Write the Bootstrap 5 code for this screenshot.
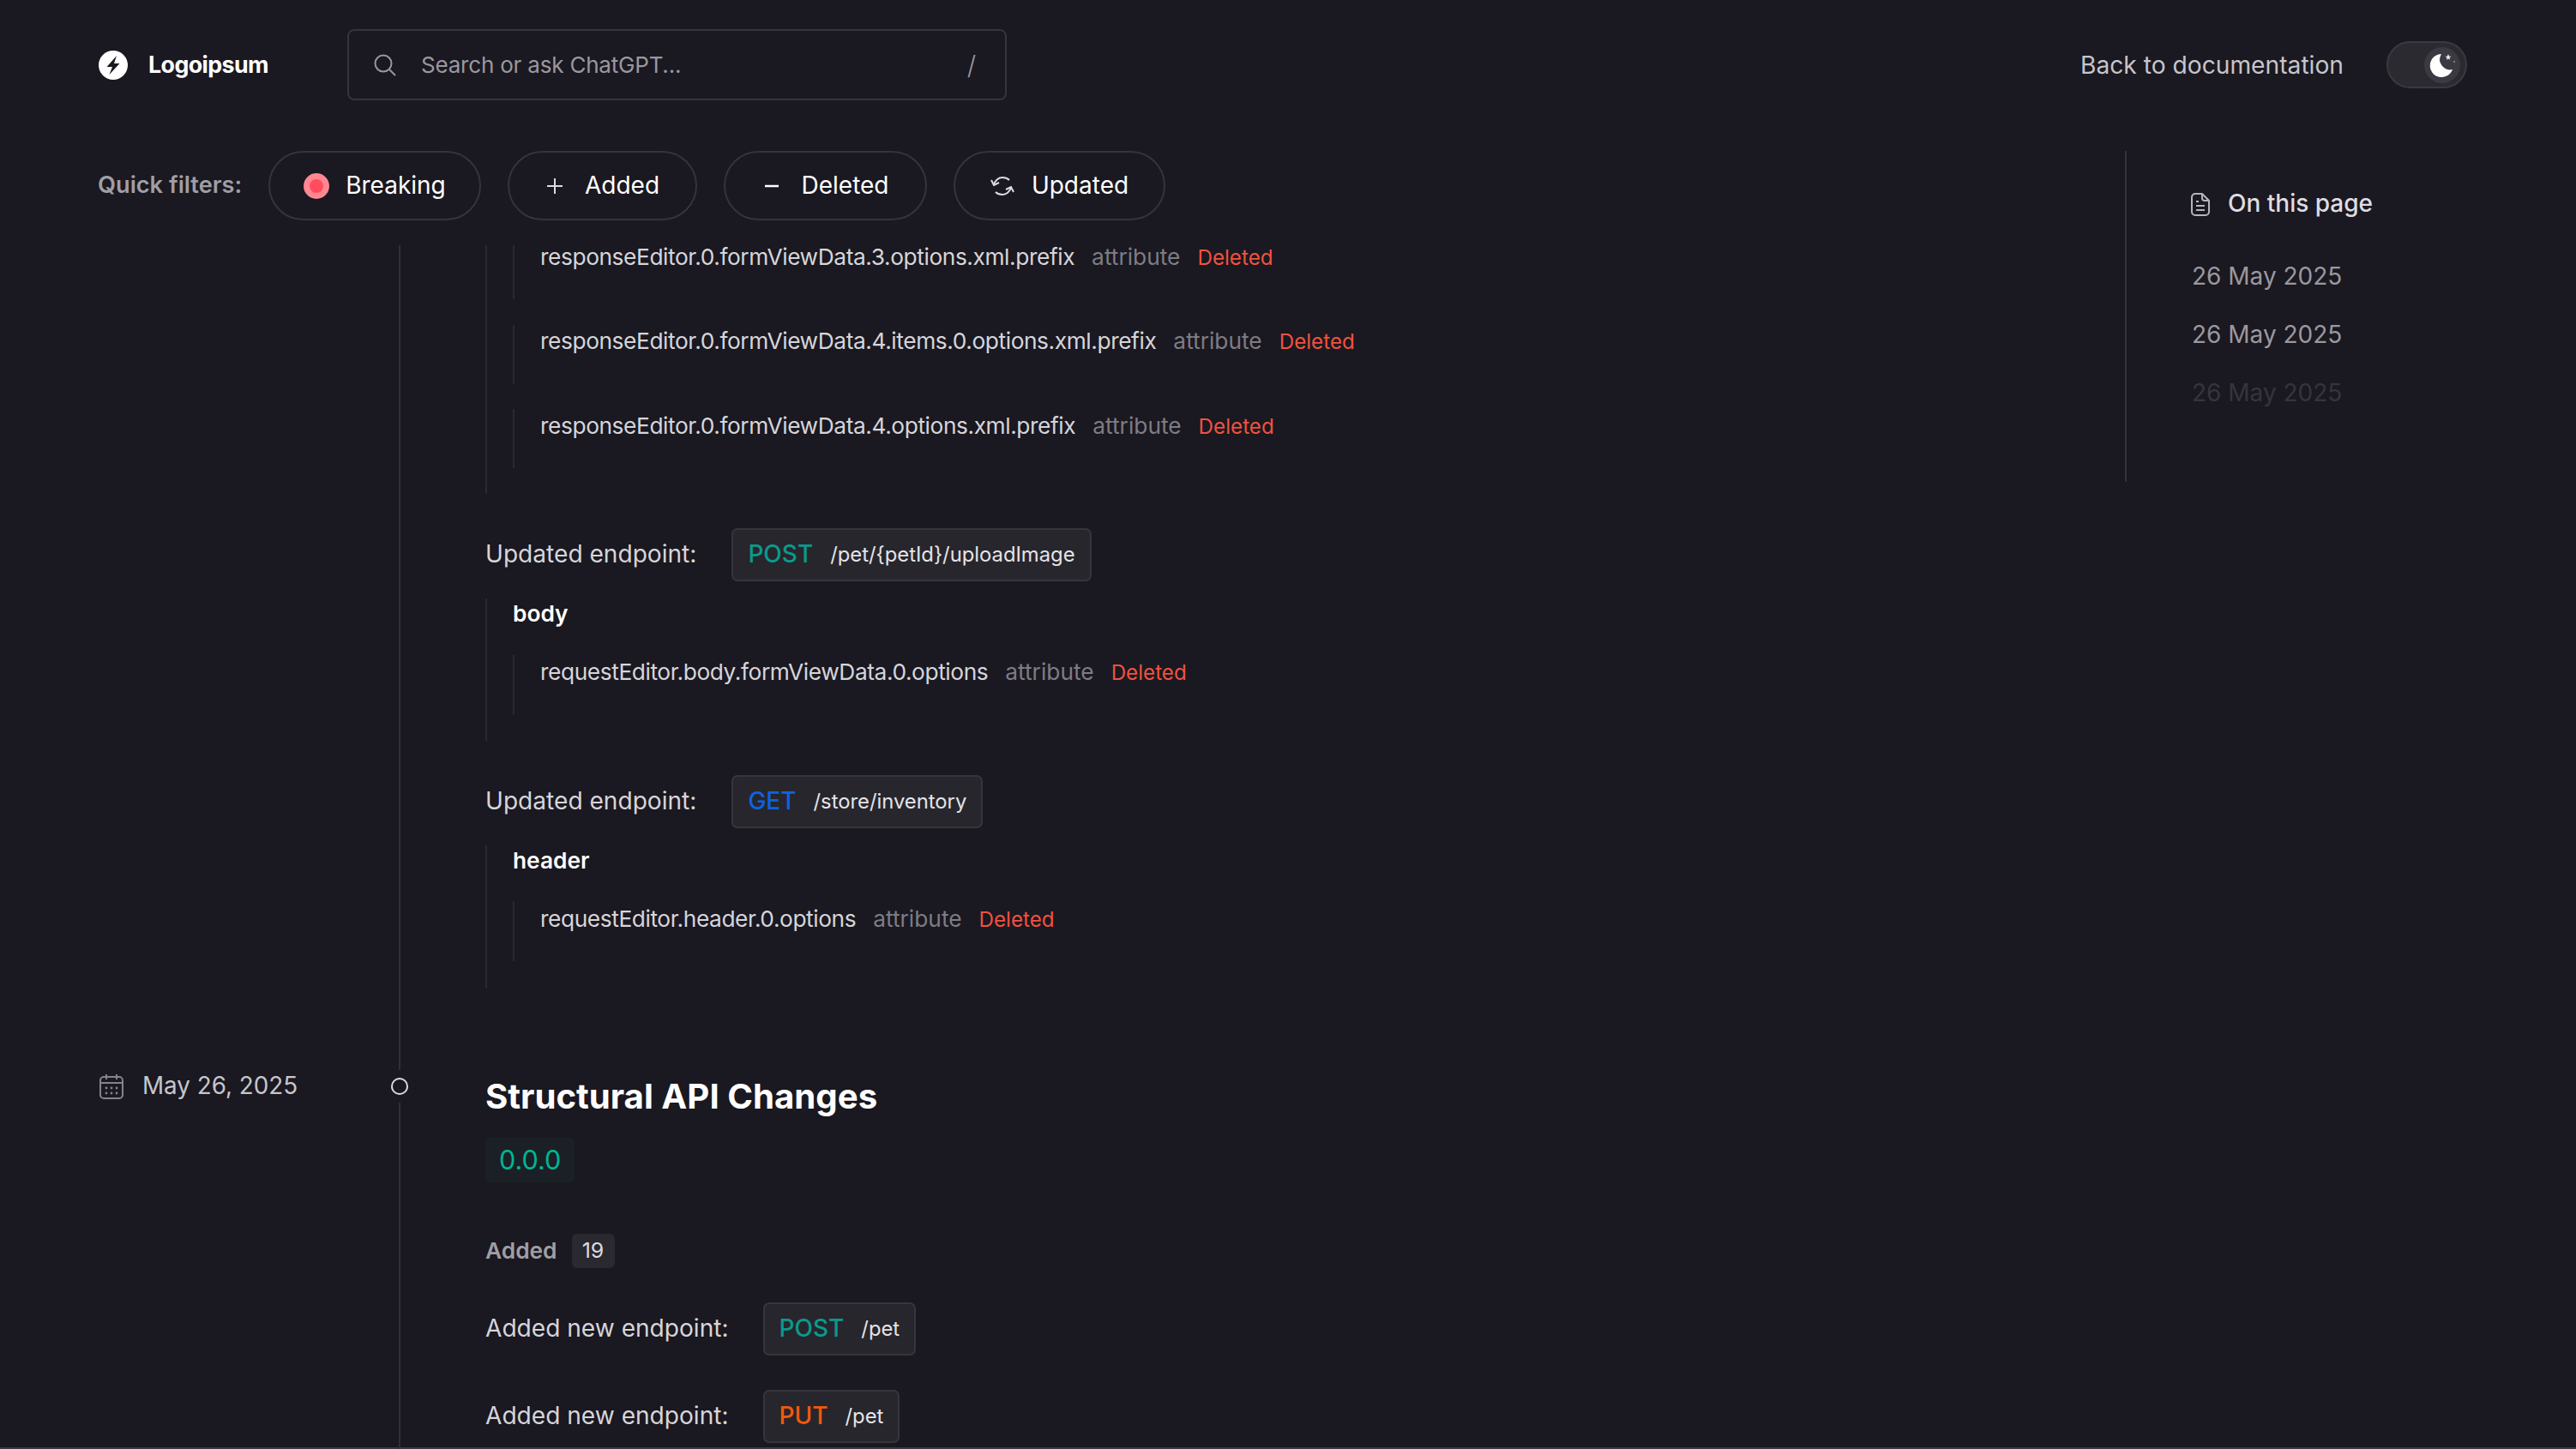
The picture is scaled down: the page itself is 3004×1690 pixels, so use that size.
<!doctype html>
<html lang="en">
<head>
<meta charset="utf-8">
<title>Changelog</title>
<link href="https://cdn.jsdelivr.net/npm/bootstrap@5.3.0/dist/css/bootstrap.min.css" rel="stylesheet">
<style>
:root{--bgc:#1a1820;--ln:#35333b;--txt:#dcdbe0;--mut:#9a989f}
html,body{height:100%;overflow:hidden}
body{background:var(--bgc);color:var(--txt);font-family:Inter,"Liberation Sans",sans-serif;font-size:28px;line-height:1.2}
.shell{height:1690px;border-bottom:2px solid #3a3840}
.topbar{height:176px;padding:34px 127px 59px 115px}
.brand{width:290px;color:#fff;font-weight:700;font-size:26.8px;letter-spacing:-.6px;gap:24px}
.searchbox{width:769px;height:83px;border:2px solid var(--ln);border-radius:8px;padding:0 34px 0 28px;color:var(--mut);font-size:26px;letter-spacing:-.2px;gap:28px}
.slashkey{font-size:30px;font-weight:300}
.backlink{color:#c6c5ca;font-size:28.2px;text-decoration:none;margin-right:50px;padding-top:2px}
.modeswitch{width:94px;height:55px;border-radius:28px;background:#2b2a31;border:2px solid #3a3840;padding-right:6px}
.modeknob{width:42px;height:42px;border-radius:50%;background:#3b3a42}
.mainwrap{height:1512px}
.leftcol{width:2478px;flex:none;padding-left:114px}
.filterbar{height:110px;padding-bottom:29px;gap:31px}
.filterlabel{color:#a09ea5;font-weight:600;font-size:27.2px;width:168px;white-space:nowrap}
.filterpill{height:81px;border:2px solid var(--ln);border-radius:41px;color:#fff;font-size:28px;gap:24px;background:transparent}
.pill-a{width:248px;gap:19px}.pill-b{width:221px}.pill-c{width:237px}.pill-d{width:247px;gap:20px}
.hotdot{width:30px;height:30px;border-radius:50%;background:#ff4d5e;border:7px solid #ff8791}
.timeblock{display:flex}
.datecol{width:351px;flex:none;color:#c6c5ca;font-size:27.8px;gap:22px;padding:0 0 0 2px;height:36px}
.timebody{flex:1;position:relative;border-left:2px solid #302e36;padding-left:99px}
.changegrp{border-left:2px solid #2a2830;padding-left:30px;padding-bottom:30px}
.changerow{border-left:2px solid #2a2830;height:69px;padding-left:30px;padding-top:8.600px;margin-bottom:29.5px;gap:20px;font-size:26.3px;line-height:.8;letter-spacing:-.41px;color:#d6d5da;align-items:baseline}
.changerow:first-child{height:63px;padding-top:2.600px}
.changerow:last-child{margin-bottom:0}
.attrname{color:#7e7c84;font-size:26.3px;letter-spacing:0}
.deltag{color:#f0523f;font-size:24.2px;letter-spacing:0}
.endrow{gap:40px;font-size:28.1px;color:#d6d5da;height:62px}
.endchip{height:62px;background:#27262d;border:2px solid #36343c;border-radius:7px;padding:0 17px;gap:20px;font-size:23.8px;color:#e4e3e7;margin-left:1px}
.verb{font-size:28px;font-weight:500}
.v-post{color:#0a9a8c}.v-get{color:#0f62e0}.v-put{color:#f2590c}
.grouphead{color:#fff;font-weight:600;font-size:26.3px;height:66px;padding-top:2px}
.blockgap{margin-top:40px}
.mt-grp{margin-top:20px;padding-bottom:31px}
.nodedot{position:absolute;left:-11px;top:104.500px;width:20px;height:20px;border-radius:50%;border:2px solid #dcdbe0;background:var(--bgc);box-shadow:0 0 0 9px var(--bgc)}
.bigtitle{color:#fff;font-weight:700;font-size:40.2px;line-height:48px;margin:0}
.verbadge{display:inline-flex;align-items:center;height:52px;padding:0 16px;background:#1b2026;border-radius:5px;color:#00b593;font-size:30.6px;margin-top:24px}
.addhead{color:#a09ea5;font-weight:600;font-size:26.3px;gap:17px;margin-top:60px;height:40px}
.countpill{width:50px;height:40px;background:#2a2930;border-radius:6px;color:#dcdbe0;font-weight:400;font-size:24.9px}
.lastblock .timebody{padding-top:103px;padding-bottom:60px}
.lastblock .datecol{margin-top:96.500px}
.added-row{margin-top:40px}
.added-row .endchip{margin-left:0}
.aside-pane{height:386px;border-left:2px solid #33313a;padding:48px 0 0 75px}
.asidehead{color:#dedde2;font-weight:500;font-size:28px;gap:21px;height:28px}
.asidelink{color:#9a989f;font-size:28px;height:68px;padding-left:1px}
.fadelink{color:#36343c}
.mt-list{margin-top:54px}
</style>
</head>
<body>
<div class="shell d-flex flex-column">
  <header class="topbar d-flex align-items-center">
    <div class="brand d-flex align-items-center">
      <svg width="34" height="34" viewBox="0 0 34 34"><circle cx="17" cy="17" r="17" fill="#fff"/><path d="M21 6 9.500 19H16l-3.500 9L24.500 15H18z" fill="#1a1820"/></svg>
      <span>Logoipsum</span>
    </div>
    <div class="searchbox d-flex align-items-center">
      <svg width="28" height="28" viewBox="0 0 28 28" fill="none" stroke="#9a989f" stroke-width="2"><circle cx="12" cy="12" r="9.500"/><path d="m19 19 7 7"/></svg>
      <span class="flex-grow-1">Search or ask ChatGPT...</span>
      <span class="slashkey">/</span>
    </div>
    <div class="ms-auto d-flex align-items-center">
      <a class="backlink" href="#">Back to documentation</a>
      <div class="modeswitch d-flex align-items-center justify-content-end">
        <div class="modeknob d-flex align-items-center justify-content-center">
          <svg width="34" height="34" viewBox="0 0 34 34"><path d="M16 4A13.500 13.500 0 1 0 29 22 12 12 0 0 1 16 4z" fill="#fff"/><path d="m24 4 1 2.500 2.500.2-2 1.600.7 2.500-2.200-1.400-2.200 1.400.7-2.500-2-1.600 2.500-.2z" fill="#e8e8ec"/><circle cx="31" cy="13" r=".8" fill="#ccc"/></svg>
        </div>
      </div>
    </div>
  </header>
  <div class="mainwrap d-flex">
    <div class="leftcol">
      <div class="filterbar d-flex align-items-center">
        <span class="filterlabel">Quick filters:</span>
        <button class="filterpill pill-a d-flex align-items-center justify-content-center"><span class="hotdot"></span>Breaking</button>
        <button class="filterpill pill-b d-flex align-items-center justify-content-center">
          <svg width="22" height="22" viewBox="0 0 22 22" stroke="#dcdbe0" stroke-width="2"><path d="M11 2v18M2 11h18"/></svg>Added</button>
        <button class="filterpill pill-c d-flex align-items-center justify-content-center">
          <svg width="22" height="22" viewBox="0 0 22 22" stroke="#fff" stroke-width="2.500"><path d="M3 11h16"/></svg>Deleted</button>
        <button class="filterpill pill-d d-flex align-items-center justify-content-center">
          <svg width="28" height="26" viewBox="0 0 28 26" fill="none" stroke="#dcdbe0" stroke-width="2"><path d="M4 12C5 6 10 3 14 3c3 0 6 1 8 3"/><path d="M24 14c-1 6-6 9-10 9-3 0-6-1-8-3"/><path d="M1 6l3 6 6-3"/><path d="M27 20l-3-6-6 3"/></svg>Updated</button>
      </div>
      <div class="stream">
        <div class="timeblock">
          <div class="datecol"></div>
          <div class="timebody">
            <div class="changegrp">
              <div class="changerow d-flex"><span>responseEditor.0.formViewData.3.options.xml.prefix</span><span class="attrname">attribute</span><span class="deltag">Deleted</span></div>
              <div class="changerow d-flex"><span>responseEditor.0.formViewData.4.items.0.options.xml.prefix</span><span class="attrname">attribute</span><span class="deltag">Deleted</span></div>
              <div class="changerow d-flex"><span>responseEditor.0.formViewData.4.options.xml.prefix</span><span class="attrname">attribute</span><span class="deltag">Deleted</span></div>
            </div>
            <div class="endrow blockgap d-flex align-items-center"><span>Updated endpoint:</span>
              <span class="endchip d-inline-flex align-items-center"><span class="verb v-post">POST</span><span>/pet/{petId}/uploadImage</span></span></div>
            <div class="changegrp mt-grp">
              <div class="grouphead">body</div>
              <div class="changerow d-flex"><span>requestEditor.body.formViewData.0.options</span><span class="attrname">attribute</span><span class="deltag">Deleted</span></div>
            </div>
            <div class="endrow blockgap d-flex align-items-center"><span>Updated endpoint:</span>
              <span class="endchip d-inline-flex align-items-center"><span class="verb v-get">GET</span><span>/store/inventory</span></span></div>
            <div class="changegrp mt-grp">
              <div class="grouphead">header</div>
              <div class="changerow d-flex"><span>requestEditor.header.0.options</span><span class="attrname">attribute</span><span class="deltag">Deleted</span></div>
            </div>
          </div>
        </div>
        <div class="timeblock lastblock">
          <div class="datecol d-flex align-items-center">
            <svg width="28" height="30" viewBox="0 0 28 30" fill="none" stroke="#85838a" stroke-width="2"><rect x="1" y="4" width="26" height="25" rx="4"/><path d="M1 11h26M8 1v6M20 1v6"/><g stroke="none" fill="#85838a"><circle cx="8" cy="17" r="1.400"/><circle cx="14" cy="17" r="1.400"/><circle cx="20" cy="17" r="1.400"/><circle cx="8" cy="23" r="1.400"/><circle cx="14" cy="23" r="1.400"/><circle cx="20" cy="23" r="1.400"/></g></svg>
            <span>May 26, 2025</span>
          </div>
          <div class="timebody">
            <span class="nodedot"></span>
            <h2 class="bigtitle">Structural API Changes</h2>
            <span class="verbadge">0.0.0</span>
            <div class="addhead d-flex align-items-center"><span>Added</span><span class="countpill d-flex align-items-center justify-content-center">19</span></div>
            <div class="endrow added-row d-flex align-items-center"><span>Added new endpoint:</span>
              <span class="endchip d-inline-flex align-items-center"><span class="verb v-post">POST</span><span>/pet</span></span></div>
            <div class="endrow added-row d-flex align-items-center"><span>Added new endpoint:</span>
              <span class="endchip d-inline-flex align-items-center"><span class="verb v-put">PUT</span><span>/pet</span></span></div>
          </div>
        </div>
      </div>
    </div>
    <aside class="aside-pane flex-grow-1">
      <div class="asidehead d-flex align-items-center">
        <svg width="22" height="27" viewBox="0 0 22 27" fill="none" stroke="#b5b4ba" stroke-width="2"><path d="M13 1H5a4 4 0 0 0-4 4v17a4 4 0 0 0 4 4h12a4 4 0 0 0 4-4V9z"/><path d="M13 1v5a3 3 0 0 0 3 3h5M6 15h10M6 20h10M6 10h3"/></svg>
        <span>On this page</span>
      </div>
      <div class="asidelink mt-list">26 May 2025</div>
      <div class="asidelink">26 May 2025</div>
      <div class="asidelink fadelink">26 May 2025</div>
    </aside>
  </div>
</div>
</body>
</html>
